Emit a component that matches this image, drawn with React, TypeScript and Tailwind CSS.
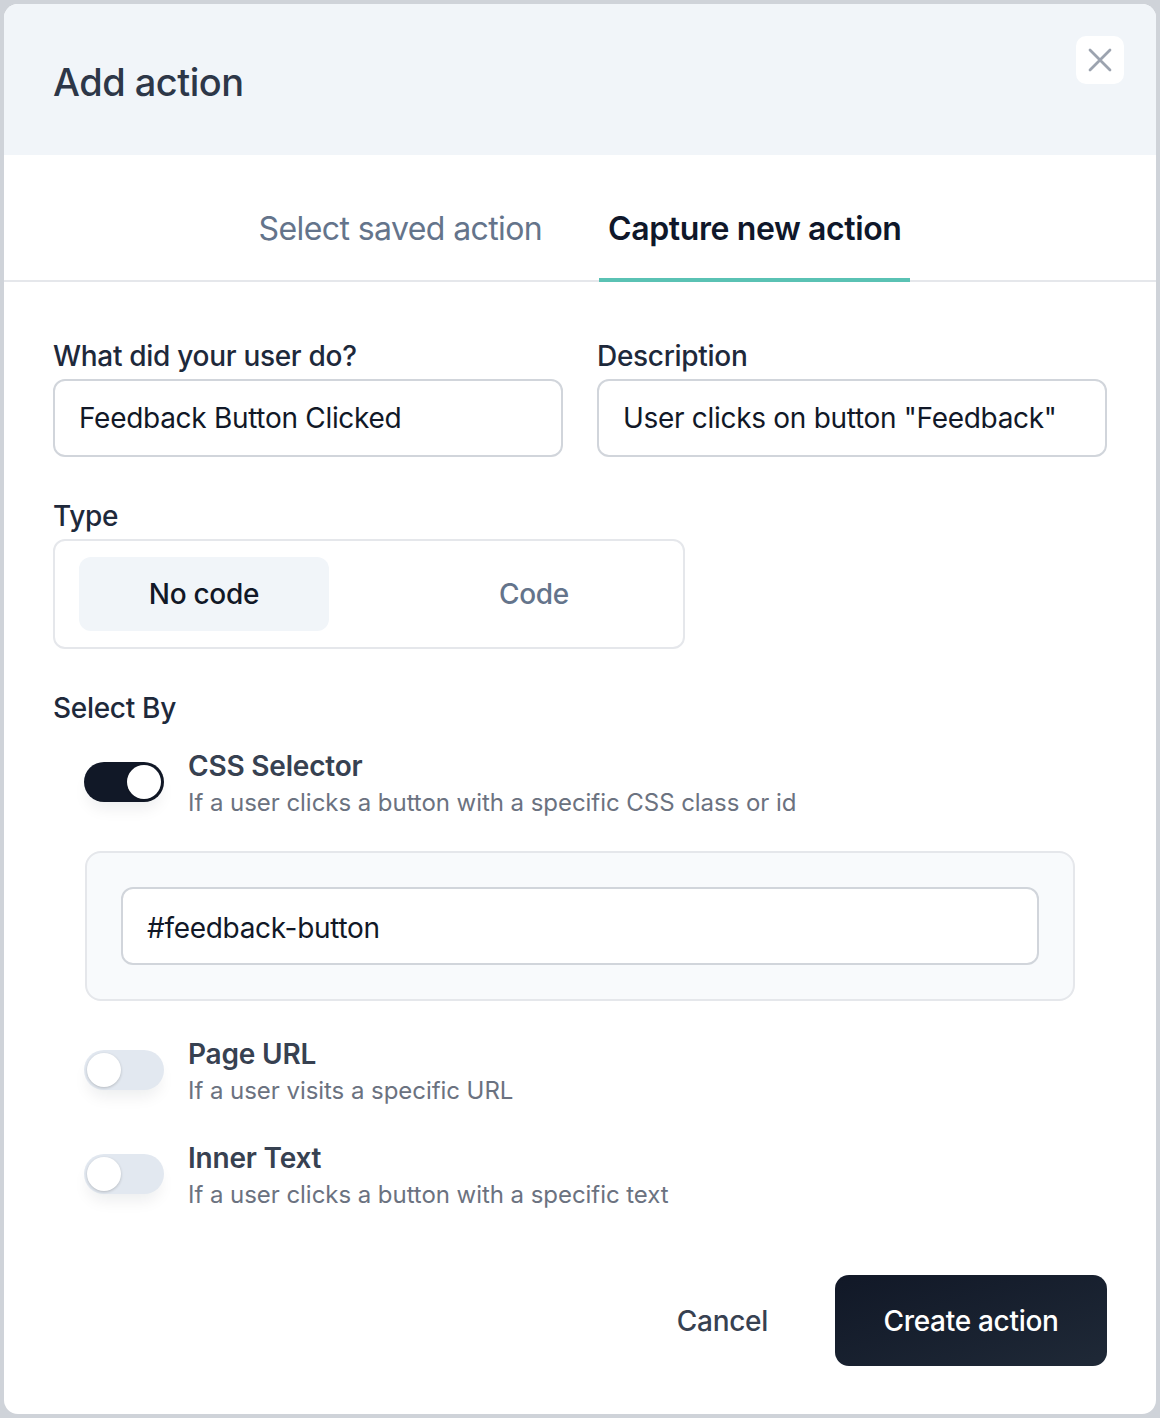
import React from 'react';

const Toggle = ({ on }: { on: boolean }) => (
  <div
    className={`relative w-[80px] h-[40px] rounded-full shrink-0 shadow-[0_10px_16px_-4px_rgba(15,23,42,0.08)] ${
      on ? 'bg-[#111827]' : 'bg-[#e2e8f0]'
    }`}
  >
    <div
      className={`absolute top-[3px] w-[34px] h-[34px] rounded-full bg-white shadow-[0_1px_3px_rgba(0,0,0,0.2)] ${
        on ? 'left-[43px]' : 'left-[3px]'
      }`}
    />
  </div>
);

const SelectOption = ({ on, title, desc }: { on: boolean; title: string; desc: string }) => (
  <div className="flex items-start ml-[31px]">
    <div className="mt-[14px]">
      <Toggle on={on} />
    </div>
    <div className="ml-[24px] flex flex-col">
      <span className="text-[28px] leading-[36px] font-semibold text-[#374151] tracking-[-0.2px]">{title}</span>
      <span className="text-[24px] leading-[37px] text-[#6b7280] tracking-[-0.05px]">{desc}</span>
    </div>
  </div>
);

const App: React.FC = () => {
  return (
    <div className="min-h-screen bg-[#cfd3d9] p-[4px] font-['Inter',sans-serif]">
      <div className="w-[1152px] h-[1410px] bg-white rounded-[14px] overflow-hidden flex flex-col">
        {/* Header */}
        <header className="h-[151px] bg-[#f1f5f9] shrink-0 flex items-start justify-between pl-[49px] pr-[32px]">
          <h1 className="mt-[54px] text-[38px] leading-[48px] font-medium text-[#2d3748] tracking-[-0.5px]">
            Add action
          </h1>
          <button className="mt-[32px] w-[48px] h-[48px] rounded-[10px] bg-white flex items-center justify-center">
            <svg width="30" height="30" viewBox="0 0 24 24" fill="none" stroke="#9ca3af" strokeWidth="2.2" strokeLinecap="round">
              <path d="M4 4L20 20M20 4L4 20" />
            </svg>
          </button>
        </header>

        {/* Tabs */}
        <div className="h-[127px] shrink-0 border-b-2 border-[#e5e7eb] flex justify-center items-end gap-[48px]">
          <div className="px-[9px] h-full flex items-center pt-[28px] pb-[2px] text-[32px] text-[#64748b] tracking-[-0.6px] border-b-4 border-transparent">
            Select saved action
          </div>
          <div className="px-[9px] h-full flex items-center pt-[24px] pb-[2px] text-[32px] font-semibold text-[#0f172a] tracking-[-0.4px] border-b-4 border-[#5ac2b4] -mb-[2px]">
            Capture new action
          </div>
        </div>

        {/* Body */}
        <div className="flex-1 flex flex-col px-[49px] pt-[54px] tracking-[-0.3px]">
          <div className="grid grid-cols-2 gap-[34px]">
            <div className="flex flex-col">
              <label className="text-[28px] leading-[40px] font-medium text-[#1e293b]">What did your user do?</label>
              <div className="mt-[3px] h-[78px] border-2 border-[#d1d5db] rounded-[12px] px-[24px] flex items-center text-[28px] text-[#111827]">
                Feedback Button Clicked
              </div>
            </div>
            <div className="flex flex-col">
              <label className="text-[28px] leading-[40px] font-medium text-[#1e293b]">Description</label>
              <div className="mt-[3px] h-[78px] border-2 border-[#d1d5db] rounded-[12px] px-[24px] flex items-center text-[28px] text-[#111827]">
                User clicks on button "Feedback"
              </div>
            </div>
          </div>

          <label className="mt-[39px] text-[28px] leading-[40px] font-medium text-[#1e293b]">Type</label>
          <div className="mt-[3px] w-[632px] h-[110px] border-2 border-[#e5e7eb] rounded-[12px] px-[24px] py-[16px] flex gap-[80px]">
            <div className="w-[250px] rounded-[12px] bg-[#f1f5f9] flex items-center justify-center text-[28px] font-medium text-[#111827]">
              No code
            </div>
            <div className="w-[250px] flex items-center justify-center text-[28px] font-medium text-[#64748b]">
              Code
            </div>
          </div>

          <label className="mt-[39px] text-[28px] leading-[40px] font-medium text-[#1e293b]">Select By</label>

          <div className="mt-[20px]">
            <SelectOption on title="CSS Selector" desc="If a user clicks a button with a specific CSS class or id" />
          </div>

          <div className="mt-[30px] mx-[32px] h-[150px] bg-[#f8fafc] border-2 border-[#e5e7eb] rounded-[16px] px-[34px] py-[34px]">
            <div className="h-[78px] bg-white border-2 border-[#d1d5db] rounded-[12px] px-[24px] pt-[3px] flex items-center text-[28px] text-[#111827]">
              #feedback-button
            </div>
          </div>

          <div className="mt-[35px] flex flex-col gap-[31px]">
            <SelectOption on={false} title="Page URL" desc="If a user visits a specific URL" />
            <SelectOption on={false} title="Inner Text" desc="If a user clicks a button with a specific text" />
          </div>

          <div className="mt-[62px] flex justify-end items-center gap-[43px]">
            <button className="px-[24px] h-[91px] text-[28px] font-medium text-[#374151]">Cancel</button>
            <button className="w-[272px] h-[91px] rounded-[14px] bg-gradient-to-br from-[#111827] to-[#1f2937] text-[28px] font-medium text-white">
              Create action
            </button>
          </div>
        </div>
      </div>
    </div>
  );
};

export default App;
